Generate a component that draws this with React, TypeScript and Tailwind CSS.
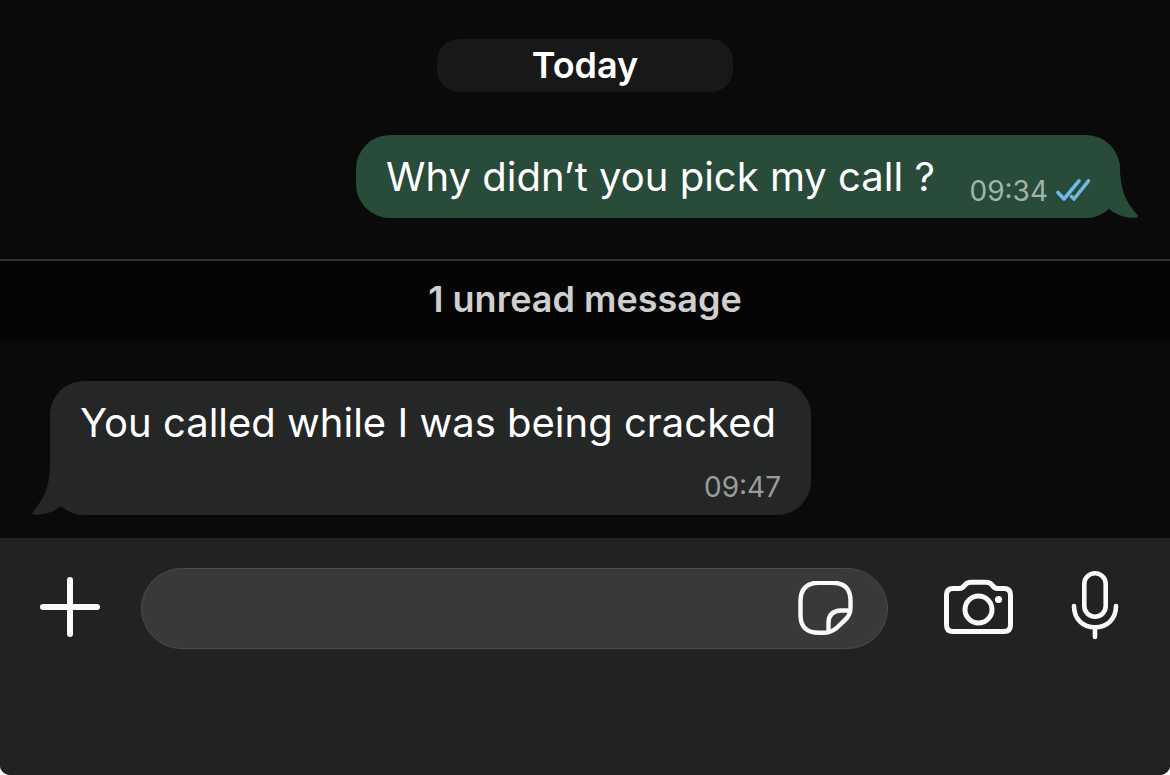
type Message = {
  id: number;
  text: string;
  time: string;
  mine: boolean;
};

const sent: Message = { id: 1, text: "Why didn’t you pick my call ?", time: "09:34", mine: true };
const received: Message = { id: 2, text: "You called while I was being cracked", time: "09:47", mine: false };

function ReadTicks() {
  return (
    <svg
      viewBox="0 0 36 24"
      width="36"
      height="24"
      fill="none"
      stroke="#6fb9e4"
      strokeWidth="3.6"
      strokeLinecap="round"
      strokeLinejoin="round"
      role="img"
      aria-label="Read"
    >
      <path d="M4 13.500 10 20 25 1.800" />
      <path d="M17.500 17.500 20 20 34.500 1.800" />
    </svg>
  );
}

function Tail({ mine }: { mine: boolean }) {
  return (
    <svg
      viewBox="0 0 40 56"
      width="40"
      height="56"
      aria-hidden
      className={
        mine
          ? "absolute bottom-0 -right-[19px] text-[#284b3a]"
          : "absolute bottom-0 -left-[19px] -scale-x-100 text-[#252726]"
      }
    >
      <path
        fill="currentColor"
        d="M4 0H20.500C21.500 26 24 36 38 52.500Q40 55 37.500 55.600C28 56.600 18 53.500 10 47L4 40Z"
      />
    </svg>
  );
}

function Bubble({ message }: { message: Message }) {
  if (message.mine) {
    return (
      <div className="relative ml-auto flex w-fit min-w-[764px] items-end justify-between rounded-[34px] bg-[#284b3a] px-[30px] pt-4 pb-[15px]">
        <Tail mine />
        <p className="relative text-[40px] leading-[52px] text-white">{message.text}</p>
        <div className="relative -mb-1 flex items-center gap-1.5">
          <time className="text-[28px] leading-8 text-[#a0b4a9]">{message.time}</time>
          <ReadTicks />
        </div>
      </div>
    );
  }

  return (
    <div className="relative w-fit min-w-[761px] rounded-[34px] bg-[#252726] px-[30px] pt-4 pb-3">
      <Tail mine={false} />
      <p className="relative text-[40px] leading-[52px] text-white">{message.text}</p>
      <time className="relative mt-[22px] block text-right text-[28px] leading-8 text-[#9b9c9b]">
        {message.time}
      </time>
    </div>
  );
}

function Composer() {
  return (
    <form
      className="flex flex-1 items-start bg-[#222222] pt-[30px] pr-[51px] pl-10 text-[#fafafa]"
      onSubmit={(e) => e.preventDefault()}
    >
      <button type="button" aria-label="Add attachment">
        <svg viewBox="0 0 60 80" width="60" height="80" fill="none" stroke="currentColor" strokeWidth="6" strokeLinecap="round">
          <path d="M30 12V66M3 39H57" />
        </svg>
      </button>

      <div className="ml-[41px] flex h-[81px] min-w-0 flex-1 items-center rounded-full border border-[#4b4b4b] bg-[#393939] pr-[33px]">
        <input
          type="text"
          aria-label="Message"
          className="h-full min-w-0 flex-1 bg-transparent pl-8 text-[36px] outline-none"
        />
        <button type="button" aria-label="Stickers">
          <svg
            viewBox="0 0 56 56"
            width="56"
            height="56"
            fill="none"
            stroke="currentColor"
            strokeWidth="4.400"
            strokeLinecap="round"
            strokeLinejoin="round"
          >
            <path d="M21 1.700H34Q52.500 1.700 52.500 20V27Q52.500 34 47 39L38 47.500Q32 51.800 26 51.800H21Q2.500 51.800 2.500 34V20Q2.500 1.700 21 1.700Z" />
            <path d="M50.500 29.500H43Q30.500 30 30.500 42V50" />
          </svg>
        </button>
      </div>

      <button type="button" aria-label="Camera" className="ml-14">
        <svg viewBox="0 0 70 80" width="70" height="80" fill="none" stroke="currentColor" strokeWidth="5" strokeLinejoin="round">
          <path d="M9 20.500H15Q18.500 20.500 20.500 17.500Q23 14.300 27 14.300H42Q46 14.300 48.500 17.500Q50.500 20.500 54 20.500H60Q66.500 20.500 66.500 27V57Q66.500 63.500 60 63.500H9Q2.500 63.500 2.500 57V27Q2.500 20.500 9 20.500Z" />
          <circle cx="34.500" cy="41.500" r="13.500" />
          <circle cx="54.500" cy="31.500" r="3.600" fill="currentColor" stroke="none" />
        </svg>
      </button>

      <button type="button" aria-label="Record voice message" className="ml-[57px]">
        <svg viewBox="0 0 48 80" width="48" height="80" fill="none" stroke="currentColor" strokeWidth="4.600" strokeLinecap="round">
          <rect x="13.300" y="5.300" width="21.400" height="43.400" rx="10.700" />
          <path d="M3 38C3 51 12 59.300 24 59.300S45 51 45 38M24 60V69" />
        </svg>
      </button>
    </form>
  );
}

export default function App() {
  return (
    <div className="min-h-screen bg-white font-['Inter','Liberation_Sans',sans-serif]">
      <main className="flex min-h-screen flex-col overflow-hidden rounded-b-[10px] bg-[#0a0a0a]">
        <div className="mx-auto mt-[39px] w-[296px] rounded-[22px] bg-[#181818] text-center text-[36px] leading-[53px] font-semibold text-white">
          Today
        </div>

        <div className="mt-[43px] pr-[50px]">
          <Bubble message={sent} />
        </div>

        <div className="mt-[41px] border-t-2 border-[#323232] bg-[#050505] pt-[11px] pb-[17px] text-center text-[36px] leading-[54px] font-semibold text-[#cfcfcf]">
          1 unread message
        </div>

        <div className="mt-[38px] mb-[23px] pl-[50px]">
          <Bubble message={received} />
        </div>

        <Composer />
      </main>
    </div>
  );
}
